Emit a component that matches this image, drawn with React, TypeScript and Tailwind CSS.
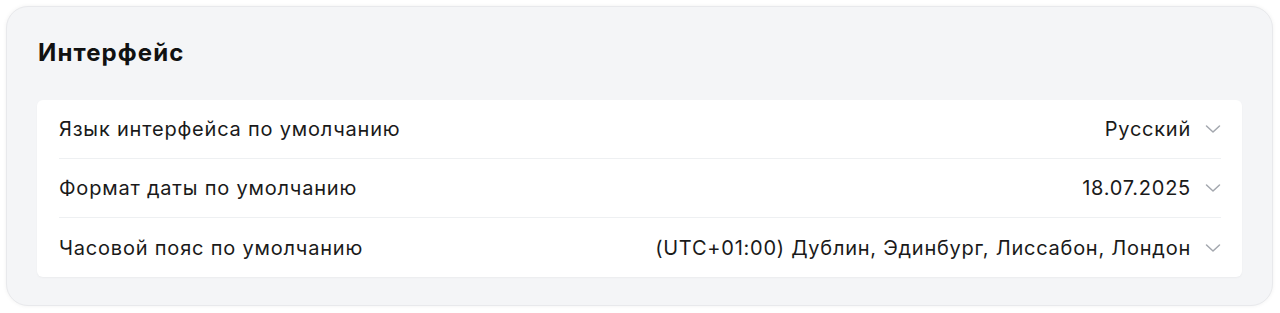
import React from "react";

const rows = [
  { label: "Язык интерфейса по умолчанию", value: "Русский" },
  { label: "Формат даты по умолчанию", value: "18.07.2025" },
  { label: "Часовой пояс по умолчанию", value: "(UTC+01:00) Дублин, Эдинбург, Лиссабон, Лондон" },
];

function Chevron() {
  return (
    <svg width="16" height="16" viewBox="0 0 16 16" fill="none" className="shrink-0">
      <path d="M1.5 5 L8 11 L14.5 5" stroke="#a3a7ae" strokeWidth="1.5" strokeLinecap="round" strokeLinejoin="round" />
    </svg>
  );
}

export default function App() {
  return (
    <div className="w-[1280px] h-[313px] bg-white p-[6px] pr-[7px]" style={{ fontFamily: "Inter, 'Noto Sans', sans-serif" }}>
      <div className="h-[300px] rounded-[22px] bg-[#f4f5f7] border border-[#e8e9ec] shadow-[0_0_4px_rgba(0,0,0,0.06)] pl-[30px] pr-[30px] pt-[30px]">
        <h2 className="text-[24px] leading-[32px] font-bold text-[#111] tracking-[1.1px] pl-[1px]">Интерфейс</h2>
        <div className="mt-[31px] bg-white rounded-[6px] pl-[22px] pr-[21px] shadow-[0_1px_2px_rgba(0,0,0,0.04)]">
          {rows.map((r, i) => (
            <div
              key={i}
              className={`flex items-center justify-between h-[59px] ${i < rows.length - 1 ? "border-b border-[#eef0f2]" : ""}`}
            >
              <span className="text-[20px] tracking-[0.8px] text-[#1a1a1a]">{r.label}</span>
              <div className="flex items-center gap-[14px]">
                <span className="text-[20px] tracking-[0.75px] text-[#1a1a1a]">{r.value}</span>
                <Chevron />
              </div>
            </div>
          ))}
        </div>
      </div>
    </div>
  );
}
